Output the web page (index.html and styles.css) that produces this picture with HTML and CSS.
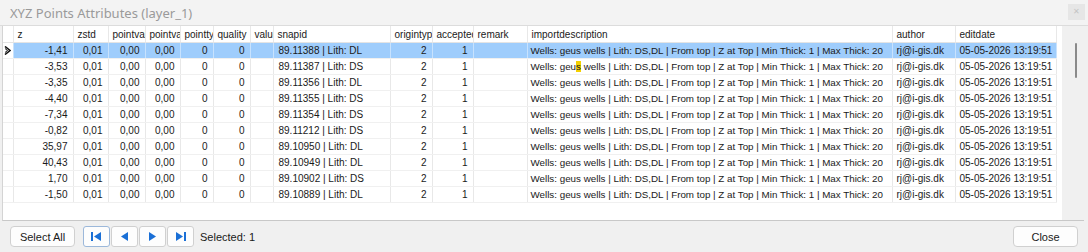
FILE: index.html
```html
<!DOCTYPE html>
<html lang="en">
<head>
  <meta charset="UTF-8" />
  <title>XYZ Points Attributes (layer_1)</title>
  <link rel="stylesheet" href="styles.css">
</head>
<body>
  <div class="window">
    <div class="titlebar">
      <span class="title">XYZ Points Attributes (layer_1)</span>
      <span class="close-x">&#x2715;</span>
    </div>

    <div class="grid-frame">
      <div class="grid">
        <table class="attr-table">
          <colgroup>
            <col style="width:10px"><col style="width:60px"><col style="width:35px"><col style="width:37px">
            <col style="width:35px"><col style="width:33px"><col style="width:37px"><col style="width:23px">
            <col style="width:117px"><col style="width:42px"><col style="width:41px"><col style="width:54px">
            <col style="width:365px"><col style="width:63px"><col style="width:101px">
          </colgroup>
          <thead>
            <tr>
              <th class="marker"></th>
              <th>z</th><th>zstd</th><th>pointval</th><th>pointval</th><th>pointtype</th><th>quality</th>
              <th>value</th><th>snapid</th><th>origintype</th><th>accepted</th><th>remark</th>
              <th>importdescription</th><th>author</th><th>editdate</th>
            </tr>
          </thead>
          <tbody id="rows"></tbody>
        </table>
      </div>
      <div class="scrollbar"><div class="thumb"></div></div>
    </div>

    <div class="toolbar">
      <button class="btn">Select All</button>
      <div class="nav">
        <button class="nav-btn focused">
          <svg width="11" height="9" viewBox="0 0 11 9"><rect x="0" y="0" width="2" height="9" fill="#1a6fd6"/><path d="M10 0 L3 4.5 L10 9 Z" fill="#1a6fd6"/></svg>
        </button>
        <button class="nav-btn">
          <svg width="9" height="9" viewBox="0 0 9 9"><path d="M8 0 L1 4.5 L8 9 Z" fill="#1a6fd6"/></svg>
        </button>
        <button class="nav-btn">
          <svg width="9" height="9" viewBox="0 0 9 9"><path d="M1 0 L8 4.5 L1 9 Z" fill="#1a6fd6"/></svg>
        </button>
        <button class="nav-btn">
          <svg width="11" height="9" viewBox="0 0 11 9"><path d="M1 0 L8 4.5 L1 9 Z" fill="#1a6fd6"/><rect x="9" y="0" width="2" height="9" fill="#1a6fd6"/></svg>
        </button>
      </div>
      <span class="selected">Selected: 1</span>
      <button class="btn close-btn">Close</button>
    </div>
  </div>

  <script>
    const data = [
      ['-1,41', '89.11388 | Lith: DL'],
      ['-3,53', '89.11387 | Lith: DS'],
      ['-3,35', '89.11356 | Lith: DL'],
      ['-4,40', '89.11355 | Lith: DS'],
      ['-7,34', '89.11354 | Lith: DS'],
      ['-0,82', '89.11212 | Lith: DS'],
      ['35,97', '89.10950 | Lith: DL'],
      ['40,43', '89.10949 | Lith: DL'],
      ['1,70', '89.10902 | Lith: DS'],
      ['-1,50', '89.10889 | Lith: DL']
    ];

    const tbody = document.getElementById('rows');
    data.forEach((d, i) => {
      const tr = document.createElement('tr');
      if (i === 0) tr.className = 'current';
      let desc = 'Wells: geus wells | Lith: DS,DL | From top | Z at Top | Min Thick: 1 | Max Thick: 20';
      if (i === 1) desc = 'Wells: geu<span class="hl">s</span> wells | Lith: DS,DL | From top | Z at Top | Min Thick: 1 | Max Thick: 20';
      tr.innerHTML = `
        <td class="marker">${i === 0 ? '<svg width="7" height="9" viewBox="0 0 7 9"><path d="M1 0.5 L6 4.5 L1 8.5" fill="none" stroke="#111" stroke-width="1.6"/><path d="M1 2.5 L3.5 4.5 L1 6.5" fill="none" stroke="#111" stroke-width="1"/></svg>' : ''}</td>
        <td class="num">${d[0]}</td><td class="num">0,01</td><td class="num">0,00</td><td class="num">0,00</td>
        <td class="num">0</td><td class="num">0</td><td></td>
        <td class="snap">${d[1]}</td><td class="num">2</td><td class="num">1</td><td></td>
        <td class="desc">${desc}</td><td>rj@i-gis.dk</td><td>05-05-2026 13:19:51</td>`;
      tbody.appendChild(tr);
    });
  </script>
</body>
</html>
```

FILE: styles.css
```css
body {
  margin: 0;
  font-family: 'Liberation Sans', Arial, sans-serif;
  font-size: 10px;
  color: #1a1a1a;
  background: #f0f0f0;
}
.window {
  width: 1088px;
  height: 252px;
  background: #f0f0f0;
  display: flex;
  flex-direction: column;
  overflow: hidden;
}
.titlebar {
  height: 26px;
  display: flex;
  align-items: center;
  justify-content: space-between;
  padding: 0 3px 0 10px;
  background: #f3f3f3;
  border-bottom: 1px solid #dcdcdc;
  box-sizing: border-box;
}
.title {
  color: #9a9a9a;
  font-family: 'Noto Sans', sans-serif;
  font-size: 13px;
}
.close-x {
  width: 17px;
  height: 16px;
  background: #e6e6e6;
  color: #c4c4c4;
  font-size: 8px;
  display: flex;
  align-items: center;
  justify-content: center;
  margin-top: -2px;
}
.grid-frame {
  height: 194px;
  margin: 0 4px 0 2px;
  display: flex;
  background: #fff;
  border-left: 1px solid #d4d4d4;
  border-bottom: 1px solid #c8c8c8;
}
.grid {
  flex: 1;
  overflow: hidden;
}
.attr-table {
  border-collapse: collapse;
  table-layout: fixed;
  width: 1053px;
}
.attr-table th,
.attr-table td {
  padding: 0 4px;
  height: 15px;
  line-height: 15px;
  white-space: nowrap;
  overflow: hidden;
  text-align: left;
  font-weight: normal;
  border-right: 1px solid #e8e8e8;
  border-bottom: 1px solid #f0f0f0;
}
.attr-table th {
  height: 16px;
  border-bottom: 1px solid #e4e4e4;
}
.attr-table .marker {
  padding: 0;
  text-align: center;
}
.attr-table td.marker svg {
  display: block;
  margin: 0 auto;
}
.attr-table td.num {
  text-align: right;
  padding-right: 5px;
}
.attr-table td.snap {
  padding-left: 5px;
}
.attr-table td.desc {
  font-size: 9.8px;
  padding-left: 3px;
}
.attr-table tr.current td {
  background: #9fcdfc;
  border-right-color: #c8e2fd;
}
.attr-table tr.current td.marker {
  background: #fff;
}
.hl {
  background: #f4d000;
}
.scrollbar {
  width: 22px;
  background: #f0f0f0;
  margin-left: 4px;
  position: relative;
}
.thumb {
  position: absolute;
  left: 13px;
  top: 17px;
  width: 2px;
  height: 35px;
  background: #8a8a8a;
  border-radius: 1px;
}
.toolbar {
  flex: 1;
  display: flex;
  align-items: center;
  padding: 0 10px 0 10px;
}
.btn {
  height: 21px;
  width: 65px;
  background: #fdfdfd;
  border: 1px solid #d0d0d0;
  border-radius: 4px;
  font-family: inherit;
  font-size: 11px;
  color: #1a1a1a;
  padding: 0;
}
.nav {
  display: flex;
  gap: 1px;
  margin-left: 8px;
}
.nav-btn {
  width: 27px;
  height: 21px;
  background: #fdfdfd;
  border: 1px solid #d0d0d0;
  border-radius: 3px;
  display: flex;
  align-items: center;
  justify-content: center;
  padding: 0;
}
.nav-btn.focused {
  border-color: #9cb8da;
}
.selected {
  margin-left: 6px;
  font-size: 11px;
}
.close-btn {
  margin-left: auto;
}
```
